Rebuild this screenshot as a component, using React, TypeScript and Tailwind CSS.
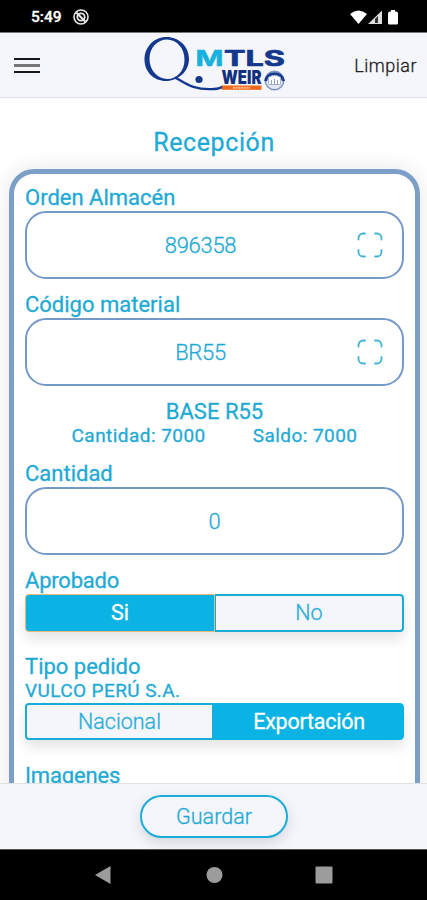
import React, { useState } from "react";

const ScanIcon = () => (
  <svg className="h-[26px] w-[26px] shrink-0" viewBox="0 0 26 26" fill="none" stroke="#3fb4d8" strokeWidth="1.800" strokeLinecap="round">
    <path d="M1.500 7.500V6A4.500 4.500 0 0 1 6 1.500h2M18 1.500h2A4.500 4.500 0 0 1 24.500 6v1.500M24.500 18v2a4.500 4.500 0 0 1-4.500 4.500h-2M8 24.500H6A4.500 4.500 0 0 1 1.500 20v-2" />
  </svg>
);

const Logo = () => (
  <svg className="h-[58px] w-[144px]" viewBox="0 0 144 58">
    <path
      fillRule="evenodd"
      fill="#15388f"
      d="M24.500 1C12 1 2.500 11 2.500 23.500S12 45 24 45S47 35.500 47 23S37 1 24.500 1ZM25 3.500C34.500 3.500 42.500 12 42.500 23.500S35 43 25.500 43S7.500 34.500 7.500 23S15.500 3.500 25 3.500Z"
    />
    <path d="M33 41.500C42 46 50 54.500 72 53C76 52.700 79 52 81 50.500" fill="none" stroke="#15388f" strokeWidth="2.400" />
    <circle cx="57" cy="43.500" r="3.600" fill="#15388f" />
    <g fontFamily="Inter, sans-serif" fontWeight="700" strokeLinejoin="round">
      <text x="53.500" y="30" fontSize="21.500" fill="#18b1df" stroke="#18b1df" strokeWidth="0.500" textLength="28" lengthAdjust="spacingAndGlyphs">M</text>
      <text x="82" y="30" fontSize="21.500" fill="#15388f" stroke="#15388f" strokeWidth="0.700" textLength="61" lengthAdjust="spacingAndGlyphs">TLS</text>
      <text x="79.500" y="47.500" fontSize="18.500" fontWeight="900" fill="#102f7c" textLength="40" lengthAdjust="spacingAndGlyphs">WEIR</text>
    </g>
    <rect x="80" y="49.500" width="39.500" height="4.300" fill="#ee6918" />
    <path d="M91 51.700h17" stroke="#ffb98c" strokeWidth="2" strokeDasharray="2 .7" />
    <circle cx="132.500" cy="44.500" r="9.300" fill="#e4e8f4" stroke="#7d92c0" strokeWidth="1.500" />
    <path d="M123.500 45a9.200 9.200 0 0 1 18 0" fill="none" stroke="#173b8d" strokeWidth="3" />
    <path d="M126.500 41.500q6-4 12 0v7h-12Z" fill="#fff" stroke="#a9b5d8" strokeWidth="1" />
    <path d="M129.500 49v-5M132.500 49v-6M135.500 49v-5" stroke="#8fa0cb" strokeWidth="1" />
  </svg>
);

const StatusBar = () => (
  <div className="flex h-[33px] shrink-0 items-center justify-between border-b border-[#777] bg-black pl-[31px] pr-[28px] pt-[2px] text-white">
    <div className="flex items-center gap-[12px]">
      <span className="w-[30px] whitespace-nowrap pt-px text-[15.500px] font-medium leading-none">5:49</span>
      <svg className="h-4 w-4" viewBox="0 0 16 16" fill="none" stroke="#e8e8e8">
        <circle cx="8" cy="8" r="7" strokeWidth="1.600" />
        <circle cx="8" cy="8" r="3.700" strokeWidth="1.800" />
        <path d="M3.200 3.500l9.300 9.300" strokeWidth="2" />
      </svg>
    </div>
    <svg className="h-4 w-[50px]" viewBox="0 0 50 16" fill="#fff">
      <path d="M1 5Q9.500-2 18 5L9.500 15Z" />
      <path d="M33 1.500V15H19Z" fill="#ddd" />
      <path d="M29 7v7h-3v-4Z" fill="#333" />
      <path d="M42 1h4v1.500h1q2 0 2 2V14q0 1.500-1.500 1.500h-7Q39 15.500 39 14V4.500q0-2 2-2h1Z" />
    </svg>
  </div>
);

type FieldProps = {
  label: string;
  value: string;
  scan?: boolean;
};

const Field = ({ label, value, scan }: FieldProps) => (
  <div>
    <div className="h-[26px] whitespace-nowrap text-[22px] leading-[26px]">{label}</div>
    <div className="flex h-[68px] items-center rounded-[21px] border-2 border-[#7499c7] pr-[19px]">
      <span className={`flex-1 text-center text-[22px] font-light tracking-[-0.3px] ${scan ? "pl-[17px]" : "pl-[19px]"}`}>
        {value}
      </span>
      {scan && <ScanIcon />}
    </div>
  </div>
);

export default function App() {
  const [approved, setApproved] = useState(true);
  const [exported, setExported] = useState(true);

  const active = "bg-[#0ab3e3] text-white";
  const inactive = "bg-[#f4f6fb] font-light text-[#27add6]";

  return (
    <div className="flex h-[900px] w-[427px] flex-col overflow-hidden bg-white font-['Roboto',sans-serif] text-[#1faad5] [-webkit-text-stroke:0.3px]">
      <StatusBar />

      {/* Toolbar */}
      <header className="grid h-[65px] shrink-0 grid-cols-[1fr_144px_1fr] items-center border-b border-[#dcdee3] bg-[#f4f6fb]">
        <button className="ml-[14px] flex w-[26px] flex-col gap-[4px]">
          <span className="h-[2px] w-full bg-[#171717]" />
          <span className="h-[3px] w-full bg-[#777]" />
          <span className="h-[2px] w-full bg-[#171717]" />
        </button>
        <Logo />
        <button className="mr-[10px] justify-self-end text-[18px] font-light tracking-[0.5px] text-[#222]">
          Limpiar
        </button>
      </header>

      {/* Form */}
      <main className="min-h-0 flex-1 overflow-hidden px-[9px]">
        <h1 className="flex h-[71px] items-end justify-center pb-[12px] pl-px text-[25px] leading-[29px] tracking-[0.6px]">
          Recepción
        </h1>
        <section className="h-[680px] w-[411px] rounded-[25px] border-5 border-[#7b9fc7] px-[11px] pt-[11px] shadow-[0_0_22px_rgba(0,0,0,0.1)]">
          <Field label="Orden Almacén" value="896358" scan />
          <div className="mt-[13px]">
            <Field label="Código material" value="BR55" scan />
          </div>

          <div className="mt-[13px] h-[25px] text-center text-[22px] leading-[26px]">BASE R55</div>
          <div className="flex h-[25px] justify-center gap-[47px] text-[19px] leading-[24px] tracking-[0.45px]">
            <span>Cantidad: 7000</span>
            <span>Saldo: 7000</span>
          </div>

          <div className="mt-[12px]">
            <Field label="Cantidad" value="0" />
          </div>

          <div className="mt-[13px] h-[26px] text-[22px] leading-[26px] tracking-[-0.2px]">Aprobado</div>
          <div className="flex h-[38px] rounded-[4px] text-[21.500px] shadow-[0_7px_13px_rgba(0,0,0,0.11)]">
            <button
              onClick={() => setApproved(true)}
              className={`w-[190px] rounded-l-[4px] border border-[#e8b878] pt-px ${approved ? active : inactive}`}
            >
              Si
            </button>
            <button
              onClick={() => setApproved(false)}
              className={`flex-1 rounded-r-[4px] border-2 border-l border-[#18acd7] pt-px ${approved ? inactive : active}`}
            >
              No
            </button>
          </div>

          <div className="mt-[22px] h-[26px] text-[22px] leading-[26px]">Tipo pedido</div>
          <div className="h-[23px] text-[19px] leading-[22px] tracking-[0.4px]">VULCO PERÚ S.A.</div>
          <div className="flex h-[37px] rounded-[4px] text-[21.500px] shadow-[0_7px_13px_rgba(0,0,0,0.11)]">
            <button
              onClick={() => setExported(false)}
              className={`w-[189px] rounded-l-[4px] border-2 border-[#18acd7] pt-px ${exported ? inactive : active}`}
            >
              Nacional
            </button>
            <button
              onClick={() => setExported(true)}
              className={`flex-1 rounded-r-[4px] border border-[#0ab3e3] pt-[2px] tracking-[-0.25px] ${exported ? active : inactive}`}
            >
              Exportación
            </button>
          </div>

          <div className="mt-[23px] h-[26px] text-[22px] leading-[26px] tracking-[-0.15px]">Imagenes</div>
        </section>
      </main>

      <footer className="flex h-[66px] shrink-0 justify-center border-t border-[#dfe1e5] bg-[#f4f6fb] pl-px pt-[11px]">
        <button className="h-[43px] w-[148px] rounded-full border-2 border-[#1badd8] bg-[#f4f6fb] pt-px text-[21.500px] font-light shadow-[0_5px_14px_rgba(0,0,0,0.13)]">
          Guardar
        </button>
      </footer>

      {/* System navigation */}
      <nav className="flex h-[51px] shrink-0 items-start justify-center border-t border-[#555] bg-black pt-[16px]">
        <svg className="h-[18px] w-[238px]" viewBox="0 0 238 18" fill="#9c9c9c">
          <path d="M0 9L15.500 0V18Z" />
          <circle cx="119.500" cy="9" r="8" />
          <rect x="220.500" y="0.500" width="17" height="17" rx="1" />
        </svg>
      </nav>
    </div>
  );
}
